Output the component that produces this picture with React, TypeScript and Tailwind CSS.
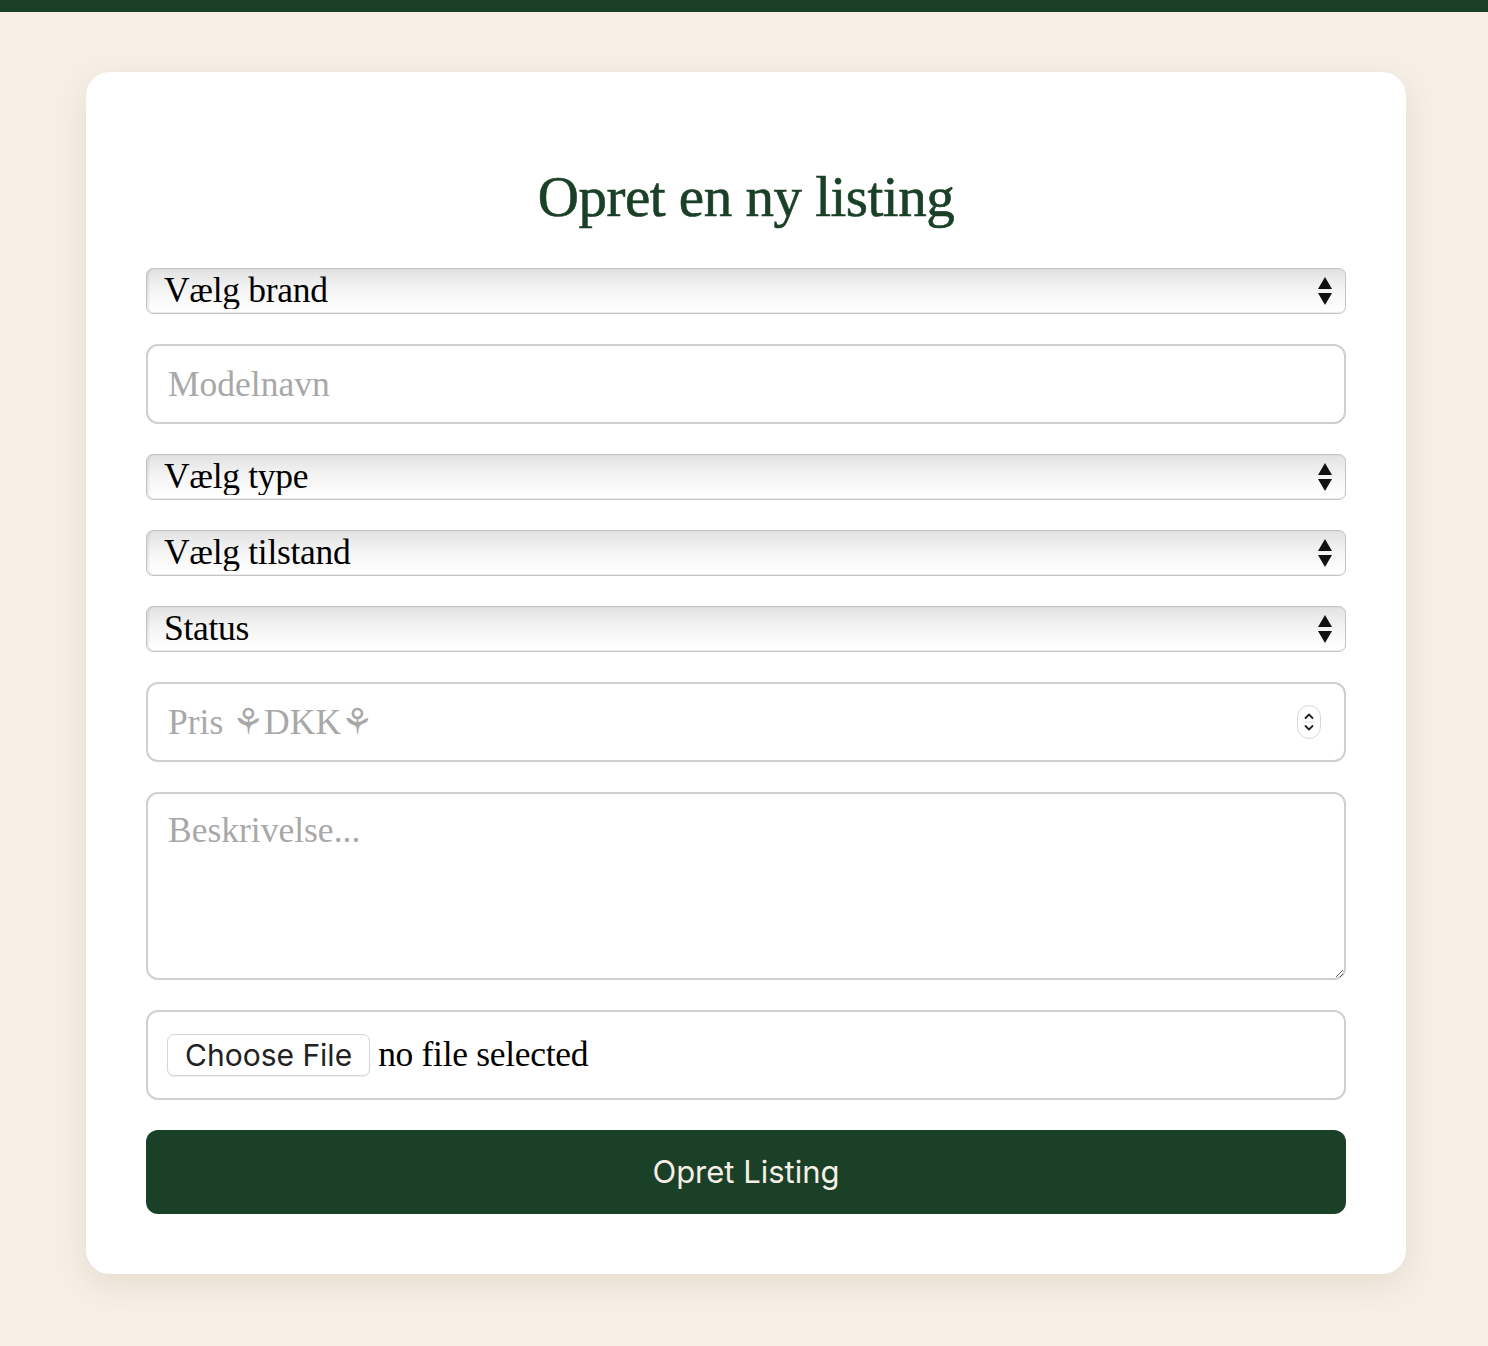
import React from "react";

const serif = "font-['Liberation_Serif','DejaVu_Serif',serif]";

function Arrows() {
  return (
    <svg width="16" height="30" viewBox="0 0 16 30" className="pointer-events-none absolute right-[13px] top-1/2 -translate-y-1/2">
      <path d="M8 1 L15 13 L1 13 Z" fill="#111" />
      <path d="M1 17 L15 17 L8 29 Z" fill="#111" />
    </svg>
  );
}

function FakeSelect({ label }: { label: string }) {
  return (
    <div className="relative h-[46px] w-full">
      <select
        className={`${serif} h-full w-full appearance-none rounded-[7px] border border-[#c4c4c4] bg-[linear-gradient(to_bottom,#e2e2e2,#f3f3f3_45%,#fdfdfd_85%,#ffffff)] pl-[17px] text-[35.5px] leading-none tracking-[-0.3px] text-black shadow-[inset_2px_0_2px_rgba(0,0,0,0.08),inset_0_-1px_0_rgba(0,0,0,0.05)] outline-none`}
        defaultValue=""
      >
        <option value="">{label}</option>
      </select>
      <Arrows />
    </div>
  );
}

export default function App() {
  return (
    <div className="h-[1346px] w-full overflow-hidden bg-[#f6efe6]">
      <div className="h-[12px] w-full bg-[#1b4028]" />
      <div className="pl-[86px] pt-[60px]">
        <div className="w-[1320px] rounded-[24px] bg-white px-[60px] pt-[92px] pb-[60px] shadow-[0_10px_30px_rgba(120,90,50,0.12)]">
          <h1 className={`${serif} text-center text-[57px] leading-[66px] tracking-[-0.5px] text-[#1b4028] [-webkit-text-stroke:0.6px_#1b4028]`}>
            Opret en ny listing
          </h1>
          <div className="mt-[38px] flex flex-col gap-[30px]">
            <FakeSelect label="Vælg brand" />
            <input
              placeholder="Modelnavn"
              className={`${serif} h-[80px] w-full rounded-[12px] border-2 border-[#cfcfcf] px-[20px] text-[35.5px] placeholder:text-[#a8a8a8] outline-none`}
            />
            <FakeSelect label="Vælg type" />
            <FakeSelect label="Vælg tilstand" />
            <FakeSelect label="Status" />
            <div className="relative">
              <input
                type="number"
                placeholder="Pris ⚘DKK⚘"
                className={`${serif} h-[80px] w-full rounded-[12px] border-2 border-[#cfcfcf] px-[20px] text-[35.5px] placeholder:text-[#a8a8a8] outline-none [appearance:textfield] [&::-webkit-inner-spin-button]:appearance-none [&::-webkit-outer-spin-button]:appearance-none`}
              />
              <div className="pointer-events-none absolute right-[25px] top-1/2 flex h-[34px] w-[24px] -translate-y-1/2 flex-col items-center justify-center rounded-[12px] border border-[#d8d8d8] bg-white">
                <svg width="12" height="28" viewBox="0 0 12 28">
                  <path d="M2.5 10 L6 6.5 L9.5 10" fill="none" stroke="#222" strokeWidth="1.8" strokeLinecap="round" strokeLinejoin="round" />
                  <line x1="0" y1="14" x2="12" y2="14" stroke="#e0e0e0" strokeWidth="1" />
                  <path d="M2.5 18 L6 21.5 L9.5 18" fill="none" stroke="#222" strokeWidth="1.8" strokeLinecap="round" strokeLinejoin="round" />
                </svg>
              </div>
            </div>
            <textarea
              placeholder="Beskrivelse..."
              className={`${serif} block h-[188px] w-full resize-y rounded-[12px] border-2 border-[#cfcfcf] px-[20px] py-[14px] text-[35.5px] leading-[44px] placeholder:text-[#a8a8a8] outline-none`}
            />
            <label className="flex h-[90px] w-full cursor-pointer items-center rounded-[12px] border-2 border-[#cfcfcf] pl-[19px]">
              <input type="file" className="hidden" />
              <span className="flex h-[42px] items-center rounded-[7px] border border-[#d6d6d6] bg-white px-[17px] font-['Inter','Liberation_Sans',sans-serif] text-[30px] text-[#222] shadow-[0_1px_1px_rgba(0,0,0,0.08)]">
                Choose File
              </span>
              <span className={`${serif} ml-[8px] text-[35.5px] tracking-[-0.3px] text-black`}>no file selected</span>
            </label>
            <button className="h-[84px] w-full rounded-[12px] bg-[#1b4028] font-['Inter','Liberation_Sans',sans-serif] text-[31px] text-[#f6efe6]">
              Opret Listing
            </button>
          </div>
        </div>
      </div>
    </div>
  );
}
